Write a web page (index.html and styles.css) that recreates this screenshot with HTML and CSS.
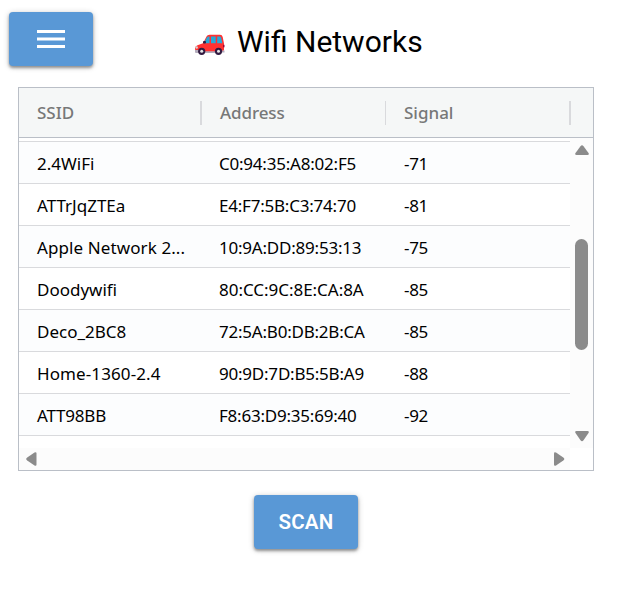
FILE: index.html
```html
<!DOCTYPE html>
<html lang="en">
<head>
<meta charset="utf-8">
<title>Wifi Networks</title>
<link rel="stylesheet" href="styles.css">
</head>
<body>
<header class="topbar">
  <button class="btn menu" aria-label="Menu"><svg width="28" height="18" viewBox="0 0 28 18"><path fill="#fff" d="M0 0h28v3H0zM0 7.500h28v3H0zM0 15h28v3H0z"/></svg></button>
  <h1 class="title">
    <svg class="car" width="32" height="22" viewBox="0 0 32 22">
      <path fill="#ff3232" d="M1 14.5Q1 12 3.500 11.300L9 9.300 12.500 2.500Q13.300.800 15.500.800H26Q28.200.800 28.700 3L30 9.500V16L28.500 18H1.500Z"/>
      <path fill="#26a9d8" d="M9.800 9.300 13 3.300Q13.500 2.400 14.800 2.400H15.500V9.300ZM17 2.400H21.700V9.300H17ZM23.200 2.400H25.800Q26.900 2.400 27.200 3.700L28.400 9.300H23.200Z"/>
      <path fill="#b4acbc" d="M1 16H6V19H2Q1 19 1 17.800ZM11 17.300H22V19H11ZM27 16.500H30.500V18.500H27Z"/>
      <rect x="9" y="7" width="3" height="2.600" rx="1" fill="#321b41"/>
      <circle cx="2.700" cy="13.500" r="1.200" fill="#d3d3d3"/><rect x="29" y="10.800" width="1.500" height="2.500" fill="#990838"/>
      <circle cx="7.700" cy="17.300" r="3.600" fill="#321b41"/><circle cx="7.700" cy="17.300" r="1.500" fill="#e6e6e6"/>
      <circle cx="24.500" cy="17.300" r="3.600" fill="#321b41"/><circle cx="24.500" cy="17.300" r="1.500" fill="#e6e6e6"/>
    </svg>
    <span class="title-text">Wifi Networks</span>
  </h1>
</header>
<main>
  <section class="grid">
    <div class="head row">
      <span class="ssid">SSID</span><i class="sep wide"></i><span class="addr">Address</span><i class="sep"></i><span class="sig">Signal</span><i class="sep wide"></i>
    </div>
    <div class="viewport">
      <div class="rows">
        <div class="partial"></div>
        <div class="row"><span class="ssid">2.4WiFi</span><span class="addr">C0:94:35:A8:02:F5</span><span class="sig">-71</span></div>
        <div class="row"><span class="ssid">ATTrJqZTEa</span><span class="addr">E4:F7:5B:C3:74:70</span><span class="sig">-81</span></div>
        <div class="row"><span class="ssid roomy">Apple Network 2...</span><span class="addr">10:9A:DD:89:53:13</span><span class="sig">-75</span></div>
        <div class="row"><span class="ssid">Doodywifi</span><span class="addr roomy">80:CC:9C:8E:CA:8A</span><span class="sig">-85</span></div>
        <div class="row"><span class="ssid">Deco_2BC8</span><span class="addr">72:5A:B0:DB:2B:CA</span><span class="sig">-85</span></div>
        <div class="row"><span class="ssid roomy">Home-1360-2.4</span><span class="addr">90:9D:7D:B5:5B:A9</span><span class="sig">-88</span></div>
        <div class="row"><span class="ssid tight">ATT98BB</span><span class="addr">F8:63:D9:35:69:40</span><span class="sig">-92</span></div>
      </div>
      <div class="vscroll">
        <svg width="14" height="11" viewBox="0 0 14 11"><path d="M5.500 1.200Q7-.800 8.500 1.200L13.500 8Q14.500 10 12.500 10H1.500Q-.500 10 .500 8Z"/></svg>
        <div class="thumb"></div>
        <svg class="down" width="14" height="11" viewBox="0 0 14 11"><path d="M5.500 9.300Q7 11.300 8.500 9.300L13.500 2Q14.500 0 12.500 0H1.500Q-.500 0 .500 2Z"/></svg>
      </div>
    </div>
    <div class="hscroll">
      <svg width="11" height="14" viewBox="0 0 11 14"><path d="M1.200 5.500Q-.800 7 1.200 8.500L8.500 13.500Q10.500 14.500 10.500 12.500V1.500Q10.500-.500 8.500.500Z"/></svg>
      <svg width="11" height="14" viewBox="0 0 11 14"><path d="M9.300 5.500Q11.300 7 9.300 8.500L2 13.500Q0 14.500 0 12.500V1.500Q0-.500 2 .500Z"/></svg>
    </div>
  </section>
  <button class="btn scan">SCAN</button>
</main>
</body>
</html>
```
FILE: styles.css
```css
* { box-sizing: border-box; }
body { margin: 0; height: 591px; overflow: hidden; background: #fff; font-family: Roboto, sans-serif; }
.topbar { display: flex; height: 87px; padding: 12px 0 0 9px; }
.btn { display: flex; align-items: center; justify-content: center; height: 54px; padding: 0; border: 0; border-radius: 4px; background: #5998d6; color: #fff; box-shadow: 0 2px 3px rgba(0,0,0,.36), 0 1px 6px rgba(0,0,0,.2); }
.menu { width: 84px; }
.title { display: flex; margin: 0 0 0 101px; height: 60px; align-items: center; font-size: 30px; font-weight: 400; line-height: 36px; color: #000; }
.car { margin: 5px 11px 0 0; }
.title-text { white-space: nowrap; }
.grid { width: 576px; height: 384px; margin-left: 18px; border: 1px solid #babfc7; font-family: "Noto Sans", sans-serif; font-size: 17px; color: #000; }
.row { display: flex; align-items: center; height: 42px; padding: 1px 0 0 18px; border-bottom: 1px solid #d9dadd; white-space: nowrap; }
.row:nth-child(even) { background: #fcfdfe; }
.head { height: 50px; padding-top: 0; background: #f5f7f7; border-color: #babfc7; color: #777878; font-weight: 500; }
.ssid { flex: none; width: 182px; letter-spacing: 0; }
.ssid.roomy { letter-spacing: .1px; }
.ssid.tight { letter-spacing: -.2px; }
.addr { flex: none; width: 185px; letter-spacing: -.22px; }
.addr.roomy { letter-spacing: -.03px; }
.sig { flex: none; letter-spacing: -.3px; }
.head .ssid { width: 163px; }
.head .addr { width: 183px; padding-left: 18px; letter-spacing: -.1px; }
.head .sig { width: 183px; padding-left: 18px; letter-spacing: 0; }
.sep { flex: none; width: 1px; height: 24px; background: #d9dadd; }
.sep.wide { width: 2px; }
.viewport { display: flex; height: 310px; }
.rows { width: 551px; overflow: hidden; }
.partial { height: 4px; border-bottom: 1px solid #d9dadd; }
.vscroll { display: flex; flex-direction: column; align-items: center; width: 23px; padding-top: 7px; background: #fcfcfc; }
.vscroll svg, .hscroll svg { fill: #8b8b8b; }
.thumb { width: 13px; height: 111px; margin-top: 83px; border-radius: 7px; background: #8b8b8b; }
.down { margin-top: 81px; }
.hscroll { display: flex; align-items: center; justify-content: space-between; width: 551px; height: 22px; padding: 0 5px 0 7px; background: #fcfcfc; }
.scan { width: 104px; margin: 24px 0 0 254px; font: 600 20.5px/24px Roboto, sans-serif; letter-spacing: .2px; }
```
